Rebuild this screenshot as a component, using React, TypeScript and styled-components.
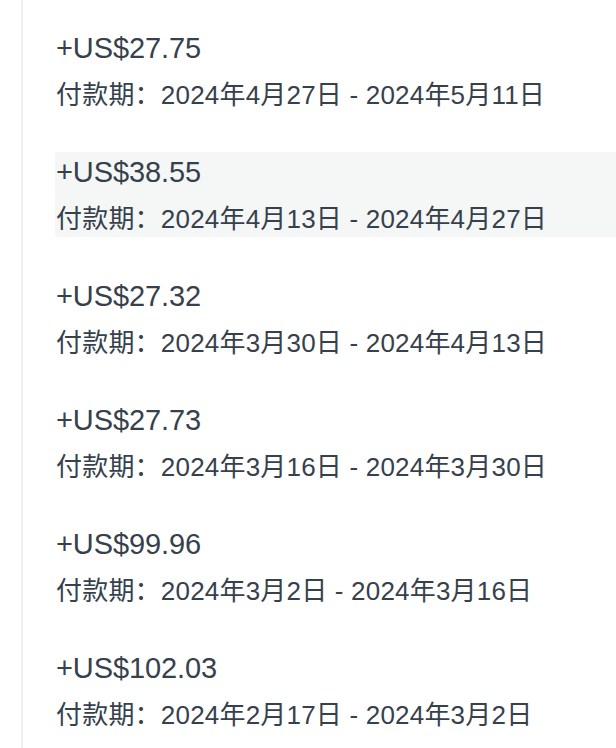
import React from 'react'
import styled, { createGlobalStyle } from 'styled-components'

const GlobalStyle = createGlobalStyle`
  html, body {
    margin: 0;
    padding: 0;
    background: #ffffff;
  }
  body {
    font-family: "Liberation Sans", "Noto Sans CJK SC", sans-serif;
    color: #36414c;
  }
`

const Page = styled.div`
  width: 616px;
  height: 748px;
  overflow: hidden;
  display: flex;
`

const Rail = styled.div`
  width: 21px;
  flex-shrink: 0;
`

const List = styled.div`
  flex: 1;
  border-left: 2px solid #eef1f2;
  padding: 28px 0 0 32px;
  display: flex;
  flex-direction: column;
  gap: 39px;
`

const Row = styled.div<{ $active?: boolean }>`
  display: flex;
  flex-direction: column;
  padding-left: 1px;
  background: ${p => (p.$active ? '#f5f7f7' : 'transparent')};
`

const Amount = styled.div`
  font-size: 29px;
  line-height: 40px;
  letter-spacing: -0.1px;
`

const Period = styled.div`
  margin-top: 9px;
  font-size: 26px;
  line-height: 36px;
  letter-spacing: 0.2px;
`

const payouts = [
  { amount: '+US$27.75', from: '2024年4月27日', to: '2024年5月11日' },
  { amount: '+US$38.55', from: '2024年4月13日', to: '2024年4月27日', active: true },
  { amount: '+US$27.32', from: '2024年3月30日', to: '2024年4月13日' },
  { amount: '+US$27.73', from: '2024年3月16日', to: '2024年3月30日' },
  { amount: '+US$99.96', from: '2024年3月2日', to: '2024年3月16日' },
  { amount: '+US$102.03', from: '2024年2月17日', to: '2024年3月2日' },
]

export default function App() {
  return (
    <Page>
      <GlobalStyle />
      <Rail />
      <List>
        {payouts.map(p => (
          <Row key={p.amount} $active={p.active}>
            <Amount>{p.amount}</Amount>
            <Period>付款期：{p.from} - {p.to}</Period>
          </Row>
        ))}
      </List>
    </Page>
  )
}
